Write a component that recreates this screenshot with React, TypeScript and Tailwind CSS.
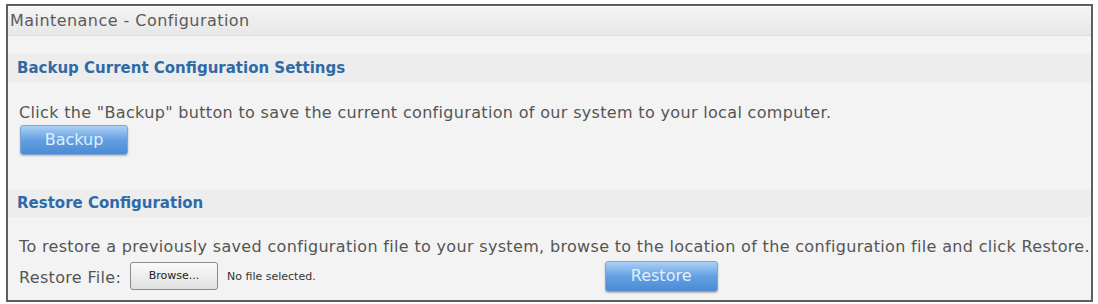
const font = { fontFamily: '"DejaVu Sans", Verdana, sans-serif' };

function BlueButton({ label, className }: { label: string; className: string }) {
  return (
    <button
      className={`rounded-[3px] border border-[#7ea6d3] bg-gradient-to-b from-[#acd0f4] via-[#62a0e2] to-[#4d8ad6] text-[16px] text-[#e3eefa] shadow-[0_1px_2px_rgba(0,0,0,0.25)] ${className}`}
    >
      {label}
    </button>
  );
}

export default function App() {
  return (
    <div className="w-[1098px] h-[304px] bg-white pt-[4px] pl-[6px]" style={font}>
      <div className="w-[1087px] h-[298px] border-2 border-[#5e5e5e] bg-[#f3f3f3] flex flex-col">
        <div className="h-[30px] flex items-center pl-[2px] bg-gradient-to-b from-[#f4f4f4] to-[#e7e7e7] border-t border-white border-b border-b-[#dcdcdc]">
          <span className="text-[16px] tracking-[0.45px] text-[#5a5a5a]">Maintenance - Configuration</span>
        </div>

        <div className="mt-[18px] h-[28px] flex items-center pl-[9px] bg-[#ededed]">
          <span className="text-[15px] font-bold text-[#2f6aa8]">Backup Current Configuration Settings</span>
        </div>
        <div className="pl-[11px] mt-[21px] text-[16px] tracking-[0.33px] text-[#555] leading-[20px] whitespace-nowrap">
          Click the "Backup" button to save the current configuration of our system to your local computer.
        </div>
        <div className="pl-[12px] mt-[2px]">
          <BlueButton label="Backup" className="w-[108px] h-[30px]" />
        </div>

        <div className="mt-[34px] h-[28px] flex items-center pl-[9px] bg-[#ededed]">
          <span className="text-[15px] font-bold text-[#2f6aa8]">Restore Configuration</span>
        </div>
        <div className="pl-[11px] mt-[20px] text-[16px] tracking-[0.33px] text-[#555] leading-[20px] whitespace-nowrap">
          To restore a previously saved configuration file to your system, browse to the location of the configuration file and click Restore.
        </div>
        <div className="pl-[11px] flex items-center h-[32px] mt-[3px]">
          <span className="text-[16px] tracking-[0.33px] text-[#555] w-[111px] mt-[3px]">Restore File:</span>
          <button className="h-[28px] w-[88px] rounded-[3px] border border-[#8a8a8a] bg-gradient-to-b from-[#fbfbfb] to-[#e0e0e0] text-[11px] text-[#222]">
            Browse...
          </button>
          <span className="ml-[9px] mt-[2px] text-[11px] text-[#333]">No file selected.</span>
          <BlueButton label="Restore" className="ml-[289px] w-[113px] h-[31px]" />
        </div>
      </div>
    </div>
  );
}
